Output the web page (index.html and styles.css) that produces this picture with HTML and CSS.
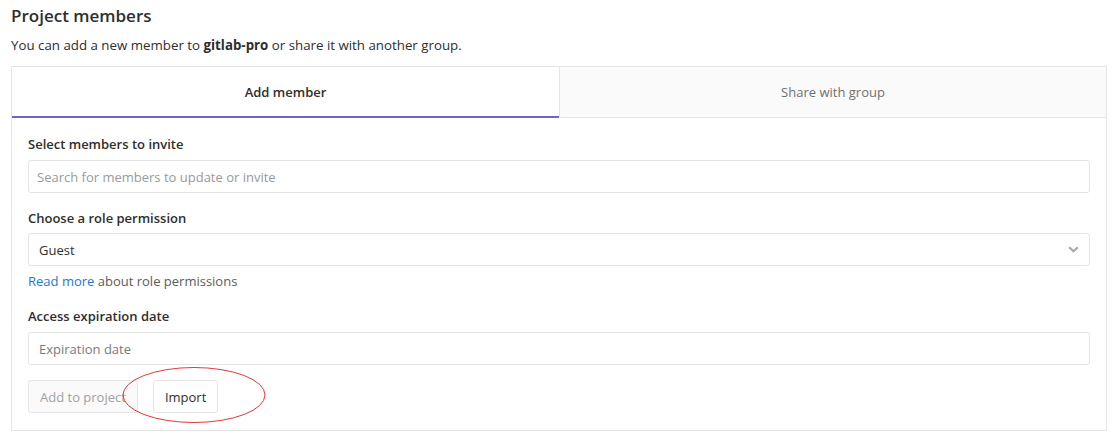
FILE: index.html
```html
<!DOCTYPE html>
<html>
<head>
<meta charset="utf-8">
<link rel="stylesheet" href="styles.css">
</head>
<body>
<div class="page">
  <h4 class="title">Project members</h4>
  <p class="lead">You can add a new member to <strong>gitlab-pro</strong> or share it with another group.</p>
  <div class="card">
    <div class="tabs">
      <div class="tab active">Add member</div>
      <div class="tab">Share with group</div>
    </div>
    <div class="body">
      <div class="group">
        <label class="label">Select members to invite</label>
        <div class="input placeholder light">Search for members to update or invite</div>
      </div>
      <div class="group">
        <label class="label">Choose a role permission</label>
        <div class="input select">
          <span>Guest</span>
          <svg class="chev" width="11" height="7" viewBox="0 0 11 7"><path d="M1.2 1.2 L5.5 5.3 L9.8 1.2" fill="none" stroke="#a8a8a8" stroke-width="2.2"/></svg>
        </div>
        <div class="help"><a class="link">Read more</a> about role permissions</div>
      </div>
      <div class="group">
        <label class="label">Access expiration date</label>
        <div class="input placeholder">Expiration date</div>
      </div>
      <div class="actions">
        <div class="btn disabled">Add to project</div>
        <div class="btn">Import</div>
        <svg class="ring" width="148" height="60" viewBox="0 0 148 60"><ellipse cx="73" cy="29" rx="71" ry="27.5" fill="none" stroke="#e0393e" stroke-width="1"/></svg>
      </div>
    </div>
  </div>
</div>
</body>
</html>
```

FILE: styles.css
```css
* { box-sizing: border-box; }
body {
  margin: 0;
  background: #fff;
  font-family: "Open Sans", "Noto Sans", sans-serif;
  color: #2e2e2e;
  font-size: 14px;
}
.page {
  padding: 4px 9px 0 11px;
}
.title {
  margin: 0;
  font-size: 17px;
  font-weight: 600;
  line-height: 24px;
  color: #2e2e2e;
}
.lead {
  margin: 8px 0 0;
  font-size: 13.3px;
  line-height: 18px;
}
.lead strong { font-weight: 700; }
.card {
  margin-top: 12px;
  border: 1px solid #e5e5e5;
}
.tabs {
  display: flex;
  height: 51px;
}
.tab {
  flex: 1;
  display: flex;
  align-items: center;
  justify-content: center;
  font-size: 13px;
  color: #707070;
  background: #fafafa;
  border-bottom: 1px solid #e5e5e5;
  border-left: 1px solid #e5e5e5;
}
.tab.active {
  flex: 0 0 547px;
  background: #fff;
  color: #2e2e2e;
  font-weight: 600;
  border-left: none;
  border-bottom: 2px solid #6a66c6;
  padding-top: 1px;
}
.body {
  padding: 17px 16px 17px 16px;
}
.group + .group {
  margin-top: 16px;
}
.group:nth-child(3) {
  margin-top: 17px;
}
.label {
  display: block;
  font-weight: 600;
  font-size: 13px;
  line-height: 18px;
  margin-bottom: 7px;
}
.group:nth-child(2) .label { margin-bottom: 6px; }
.input {
  height: 33px;
  border: 1px solid #e5e5e5;
  border-radius: 3px;
  padding: 0 10px;
  display: flex;
  align-items: center;
  font-size: 13px;
}
.placeholder { color: #7a7a7a; padding-left: 10px; }
.placeholder.light { color: #9a9a9a; padding-left: 8px; }
.select {
  justify-content: space-between;
  padding-right: 10px;
}
.help {
  margin-top: 6px;
  font-size: 13px;
  line-height: 18px;
  color: #5c5c5c;
}
.link { color: #1f78d1; }
.actions {
  position: relative;
  display: flex;
  gap: 15px;
  margin-top: 15px;
}
.btn {
  height: 33px;
  border: 1px solid #e5e5e5;
  border-radius: 3px;
  padding: 0 11px;
  display: flex;
  align-items: center;
  font-size: 13px;
  color: #2e2e2e;
  background: #fff;
}
.btn.disabled {
  background: #fafafa;
  color: #a0a0a0;
}
.ring {
  position: absolute;
  left: 93px;
  top: -14px;
}
```
